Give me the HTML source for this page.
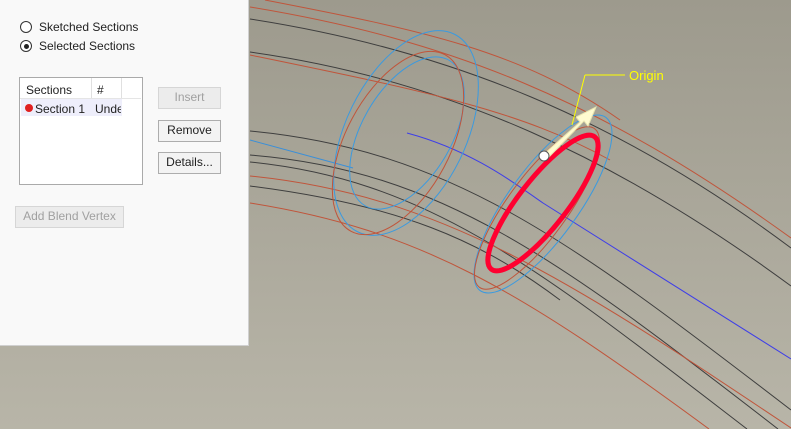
<!DOCTYPE html><html><head><style>
body{margin:0;width:791px;height:429px;overflow:hidden;position:relative;font-family:"Liberation Sans",sans-serif;font-size:12px;background:linear-gradient(#9d9a8d,#b8b5a8)}
svg{position:absolute;left:0;top:0}
#p{position:absolute;left:0;top:0;width:248px;height:345px;background:#f9f9f9;border-right:1px solid #d0d0d0;border-bottom:1px solid #d0d0d0}
.a{position:absolute;white-space:nowrap;color:#222}
.r{position:absolute;width:10px;height:10px;border:1px solid #333;border-radius:50%;background:#fff}
.b{position:absolute;border:1px solid #adadad;background:#f3f3f3;text-align:center;line-height:19px;color:#222;box-sizing:border-box}
.d{background:#ececec;border-color:#d6d6d6;color:#a0a0a0}
</style></head><body>
<svg width="791" height="429" fill="none">
<g stroke-width="1">
<path d="M265,0 C420,30 520,50 620,120" stroke="#c0553b"/>
<path d="M250,7 C450,40 600,100 791,238" stroke="#c0553b"/>
<path d="M250,19 C450,50 620,120 791,248" stroke="#3e3e3e"/>
<path d="M250,52 C450,80 620,160 791,286" stroke="#3e3e3e"/>
<path d="M250,55 C420,90 520,110 610,160" stroke="#c0553b"/>
<path d="M250,131 C450,150 570,240 791,410" stroke="#3e3e3e"/>
<path d="M250,155 C440,170 560,260 778,429" stroke="#3e3e3e"/>
<path d="M250,162 C430,180 540,270 747,429" stroke="#3e3e3e"/>
<path d="M250,176 C440,195 570,280 791,428" stroke="#c0553b"/>
<path d="M250,186 C400,205 480,240 560,300" stroke="#3e3e3e"/>
<path d="M250,203 C420,230 520,290 709,429" stroke="#c0553b"/>
<path d="M250,140 L353,168" stroke="#3a8fd8"/>
<path d="M407,133 C470,150 510,180 543,203 L791,359" stroke="#3e3ee8"/>
<ellipse cx="406" cy="133" rx="110" ry="60" transform="rotate(-64 406 133)" stroke="#3a9ae0"/>
<ellipse cx="407" cy="133" rx="84" ry="45" transform="rotate(-60 407 133)" stroke="#3a9ae0"/>
<ellipse cx="398" cy="143" rx="100" ry="52" transform="rotate(-62 398 143)" stroke="#c0553b"/>
<ellipse cx="543" cy="204" rx="107" ry="35" transform="rotate(-54 543 204)" stroke="#3a9ae0"/>
<ellipse cx="537" cy="208" rx="98" ry="30" transform="rotate(-54 537 208)" stroke="#c0553b"/>
</g>
<ellipse cx="543" cy="203" rx="84" ry="24" transform="rotate(-52 543 203)" stroke="#ff0030" stroke-width="5"/>
<path d="M585,75 L625,75 M585,75 L572,125" stroke="#ffff00"/>
<path d="M545,153 L580,122 L576,117 L596,107 L588,126 L584,121 L548,158 Z" fill="#fffbd0" stroke="#e8e4b0"/>
<circle cx="544" cy="156" r="5" fill="#fff" stroke="#555"/>
<text x="629" y="80" fill="#ffff00" font-family="Liberation Sans" font-size="13">Origin</text>
</svg>
<div id="p">
<div class="r" style="left:20px;top:21px"></div><div class="a" style="left:39px;top:20px">Sketched Sections</div>
<div class="r" style="left:20px;top:40px"></div><div style="position:absolute;left:24px;top:44px;width:5px;height:5px;border-radius:50%;background:#222"></div><div class="a" style="left:39px;top:39px">Selected Sections</div>
<div style="position:absolute;left:19px;top:77px;width:122px;height:106px;border:1px solid #aaa;background:#fff">
<div style="position:absolute;left:71px;top:0;width:1px;height:21px;background:#e0e0e0"></div>
<div style="position:absolute;left:101px;top:0;width:1px;height:21px;background:#e0e0e0"></div>
<div style="position:absolute;left:0;top:20px;width:121px;height:1px;background:#e5e5e5"></div>
<div class="a" style="left:6px;top:5px">Sections</div><div class="a" style="left:77px;top:5px">#</div>
<div style="position:absolute;left:1px;top:21px;width:101px;height:17px;background:#eeeefb"></div>
<div style="position:absolute;left:5px;top:26px;width:8px;height:8px;border-radius:50%;background:#e02020"></div>
<div class="a" style="left:15px;top:24px">Section 1</div>
<div class="a" style="left:75px;top:24px;width:26px;overflow:hidden">Undef</div>
</div>
<div class="b d" style="left:158px;top:87px;width:63px;height:22px">Insert</div>
<div class="b" style="left:158px;top:120px;width:63px;height:22px">Remove</div>
<div class="b" style="left:158px;top:152px;width:63px;height:22px">Details...</div>
<div class="b d" style="left:15px;top:206px;width:109px;height:22px">Add Blend Vertex</div>
</div>
</body></html>
